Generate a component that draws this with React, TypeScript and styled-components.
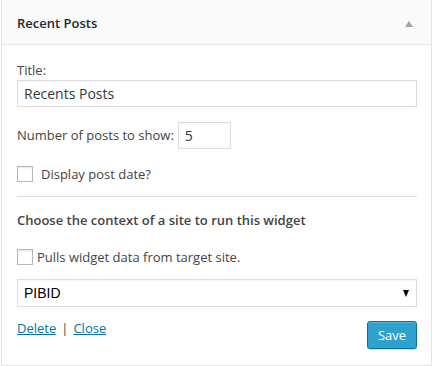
import React from "react";
import styled, { createGlobalStyle } from "styled-components";

const Global = createGlobalStyle`
  html, body { margin: 0; padding: 0; background: #fff; }
  body { font-family: "Open Sans", "Liberation Sans", sans-serif; color: #444; font-size: 13px; }
  * { box-sizing: border-box; }
`;

const Widget = styled.div`
  margin: -1px 0 0 1px;
  width: 431px;
  border: 1px solid #e5e5e5;
  background: #fff;
`;

const Header = styled.div`
  height: 45px;
  display: flex;
  align-items: center;
  justify-content: space-between;
  padding: 0 16px 0 15px;
  background: #fafafa;
  border-bottom: 1px solid #e5e5e5;
`;

const HeaderTitle = styled.h3`
  margin: 0;
  font-size: 13px;
  font-weight: 600;
  color: #23282d;
  line-height: 1;
  padding-top: 2px;
`;

const Toggle = styled.span`
  width: 0;
  height: 0;
  border-left: 4px solid transparent;
  border-right: 4px solid transparent;
  border-bottom: 6px solid #a0a5aa;
  margin-right: 2px;
  margin-top: 4px;
`;

const Body = styled.div`
  padding: 16px 14px 16px 15px;
  display: flex;
  flex-direction: column;
`;

const Label = styled.label`
  display: block;
  font-size: 13px;
  line-height: 18px;
  color: #444;
`;

const TextInput = styled.input<{ $width?: string }>`
  font-family: "Open Sans", "Liberation Sans", sans-serif;
  font-size: 14px;
  color: #32373c;
  height: 27px;
  width: ${(p) => p.$width || "100%"};
  border: 1px solid #ddd;
  box-shadow: inset 0 1px 2px rgba(0,0,0,0.04);
  padding: 0 6px;
  margin: 1px 0 0;
  outline: none;
  background: #fff;
`;

const Row = styled.div<{ $gap?: number; $mt?: number }>`
  display: flex;
  align-items: center;
  gap: ${(p) => p.$gap ?? 4}px;
  margin-top: ${(p) => p.$mt ?? 0}px;
`;

const Check = styled.span`
  width: 16px;
  height: 16px;
  border: 1px solid #b4b9be;
  background: #fff;
  box-shadow: inset 0 1px 2px rgba(0,0,0,0.1);
  flex: none;
`;

const Divider = styled.hr`
  border: 0;
  border-top: 1px solid #ddd;
  margin: 13px 0 0;
  width: 100%;
`;

const Heading = styled.div`
  font-size: 13px;
  font-weight: 600;
  color: #444;
  margin-top: 14px;
  line-height: 18px;
`;

const Select = styled.div`
  margin-top: 13px;
  height: 28px;
  border: 1px solid #ddd;
  display: flex;
  align-items: center;
  justify-content: space-between;
  padding: 0 6px 0 6px;
  font-family: "Liberation Sans", Arial, sans-serif;
  font-size: 14px;
  color: #000;
  box-shadow: inset 0 1px 2px rgba(0,0,0,0.04);
`;

const Arrow = styled.span`
  width: 0;
  height: 0;
  border-left: 3.5px solid transparent;
  border-right: 3.5px solid transparent;
  border-top: 7px solid #000;
  margin-right: 1px;
`;

const Footer = styled.div`
  display: flex;
  justify-content: space-between;
  align-items: flex-start;
  margin-top: 13px;
`;

const Links = styled.div`
  font-size: 13px;
  color: #444;
  line-height: 18px;
  margin-top: -1px;
`;

const Link = styled.a`
  color: #0073aa;
  text-decoration: underline;
`;

const Sep = styled.span`
  margin: 0 5px;
`;

const SaveButton = styled.button`
  font-family: "Open Sans", "Liberation Sans", sans-serif;
  font-size: 13px;
  height: 28px;
  width: 50px;
  padding: 0 0 1px;
  background: #2ea2cc;
  border: 1px solid #0074a2;
  border-radius: 3px;
  color: #fff;
  box-shadow: inset 0 1px 0 rgba(120,200,230,0.5), 0 1px 0 rgba(0,0,0,0.15);
  margin-top: 1px;
`;

export default function App() {
  return (
    <>
      <Global />
      <Widget>
        <Header>
          <HeaderTitle>Recent Posts</HeaderTitle>
          <Toggle />
        </Header>
        <Body>
          <Label>Title:</Label>
          <TextInput defaultValue="Recents Posts" />
          <Row $gap={4} $mt={14}>
            <Label>Number of posts to show:</Label>
            <TextInput defaultValue="5" $width="53px" />
          </Row>
          <Row $gap={8} $mt={16}>
            <Check />
            <Label>Display post date?</Label>
          </Row>
          <Divider />
          <Heading>Choose the context of a site to run this widget</Heading>
          <Row $gap={4} $mt={19}>
            <Check />
            <Label>Pulls widget data from target site.</Label>
          </Row>
          <Select>
            <span>PIBID</span>
            <Arrow />
          </Select>
          <Footer>
            <Links>
              <Link href="#">Delete</Link>
              <Sep>|</Sep>
              <Link href="#">Close</Link>
            </Links>
            <SaveButton>Save</SaveButton>
          </Footer>
        </Body>
      </Widget>
    </>
  );
}
